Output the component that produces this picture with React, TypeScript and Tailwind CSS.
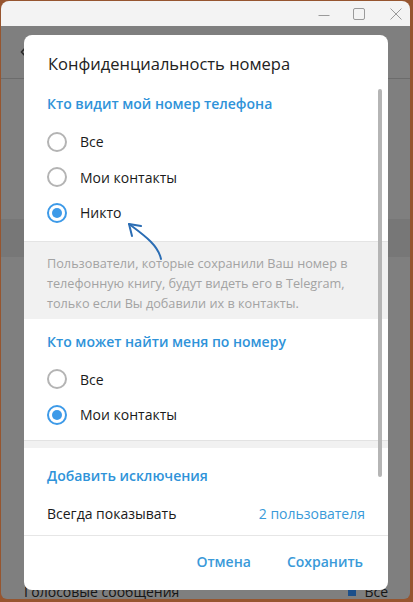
import React from 'react';

const font = { fontFamily: '"Open Sans", "Noto Sans", sans-serif' };

const Radio = ({ checked, label }: { checked?: boolean; label: string }) => (
  <div className="flex items-center h-[35.5px] pl-[23px]">
    <span
      className={`w-[20px] h-[20px] rounded-full border-2 flex items-center justify-center ${
        checked ? 'border-[#3d9ae8]' : 'border-[#b4b4b4]'
      }`}
    >
      {checked && <span className="w-[10px] h-[10px] rounded-full bg-[#3d9ae8]" />}
    </span>
    <span className="ml-[13px] text-[14px] text-[#1a1a1a]">{label}</span>
  </div>
);

const SectionTitle = ({ children }: { children: React.ReactNode }) => (
  <div className="px-[23px] text-[14px] font-semibold text-[#2f93d9] leading-[20px]">{children}</div>
);

export default function App() {
  return (
    <div className="w-[413px] h-[602px] bg-[#96552f] pl-[1px] pr-[3px] pt-[1px] pb-[3px]" style={font}>
      <div className="w-full h-full rounded-t-[8px] rounded-b-[6px] overflow-hidden flex flex-col">
        {/* title bar */}
        <div className="h-[25px] bg-[#f3f3f3] flex items-center justify-end pr-[7px] shrink-0">
          <svg width="14" height="14" viewBox="0 0 14 14">
            <path d="M1.5 8.5h11" stroke="#9a9a9a" strokeWidth="1" />
          </svg>
          <svg width="14" height="14" viewBox="0 0 14 14" className="ml-[21px]">
            <rect x="1.5" y="1.5" width="11" height="11" rx="1.5" fill="none" stroke="#9a9a9a" strokeWidth="1" />
          </svg>
          <svg width="14" height="14" viewBox="0 0 14 14" className="ml-[23px]">
            <path d="M1.5 1.5l11 11M12.5 1.5l-11 11" stroke="#9a9a9a" strokeWidth="1" />
          </svg>
        </div>

        {/* dimmed app */}
        <div className="relative flex-1 bg-[#7f7f7f]">
          <div className="h-[53px] border-b border-[#6c6c6c] flex items-center pl-[19px]">
            <svg width="8" height="12" viewBox="0 0 8 12">
              <path d="M6 1L1.5 6 6 11" stroke="#2a2a2a" strokeWidth="1.6" fill="none" />
            </svg>
          </div>
          <div className="h-[140px]" />
          <div className="h-[38px] bg-[#777777]" />
          <div className="absolute left-[23px] right-[22px] bottom-[-2px] flex justify-between items-center text-[14px] leading-[18px] text-[#151515]">
            <span>Голосовые сообщения</span>
            <span className="flex items-center gap-[8px]">
              <span className="w-[8px] h-[8px] bg-[#1c4f8a]" />
              Все
            </span>
          </div>

          {/* dialog */}
          <div className="absolute left-[23px] top-[9px] w-[364px] h-[555px] bg-white rounded-[8px] flex flex-col overflow-hidden">
            <div className="h-[53px] pl-[24px] pt-[17px] text-[16.5px] font-medium text-[#222] leading-[24px] shrink-0">
              Конфиденциальность номера
            </div>

            <div className="relative flex-1 flex flex-col overflow-hidden">
              <div className="pt-[6px]">
                <SectionTitle>Кто видит мой номер телефона</SectionTitle>
                <div className="pt-[10px]">
                  <Radio label="Все" />
                  <Radio label="Мои контакты" />
                  <Radio checked label="Никто" />
                </div>
              </div>

              <div className="mt-[10px] bg-[#f1f1f1] border-t border-[#e4e4e4] pl-[23px] pr-[20px] pt-[11px] pb-[6px] text-[12.7px] leading-[20px] text-[#a3a3a3]">
                Пользователи, которые сохранили Ваш номер в телефонную книгу, будут видеть его в Telegram, только если Вы добавили их в контакты.
              </div>

              <div className="pt-[13px]">
                <SectionTitle>Кто может найти меня по номеру</SectionTitle>
                <div className="pt-[10px]">
                  <Radio label="Все" />
                  <Radio checked label="Мои контакты" />
                </div>
              </div>

              <div className="mt-[7px] h-[8px] bg-[#f1f1f1] border-t border-[#e2e2e2] shrink-0" />

              <div className="pt-[18px]">
                <SectionTitle>Добавить исключения</SectionTitle>
              </div>
              <div className="flex items-center justify-between h-[44px] px-[23px] mt-[6px] text-[14px] shrink-0">
                <span className="text-[#1a1a1a]">Всегда показывать</span>
                <span className="text-[#3a9ad9]">2 пользователя</span>
              </div>

              {/* scrollbar */}
              <div className="absolute right-[6px] top-[1px] w-[4px] h-[388px] rounded-full bg-[#b5b5b5]" />
            </div>

            <div className="border-t border-[#e6e6e6] h-[55px] flex items-center justify-end gap-[36px] pr-[25px] pb-[4px] text-[14px] font-semibold text-[#3a9ad9] shrink-0">
              <span>Отмена</span>
              <span>Сохранить</span>
            </div>
          </div>

          {/* annotation arrow */}
          <svg className="absolute left-[0px] top-[0px] pointer-events-none" width="410" height="300">
            <g transform="translate(-1,-26)">
              <path d="M161 259 C 158 245, 145 236, 129 224" stroke="#2b6db4" strokeWidth="2" fill="none" strokeLinecap="round" />
              <path d="M129 224 L 141 226 M129 224 L 132 236" stroke="#2b6db4" strokeWidth="2" fill="none" strokeLinecap="round" />
            </g>
          </svg>
        </div>
      </div>
    </div>
  );
}
